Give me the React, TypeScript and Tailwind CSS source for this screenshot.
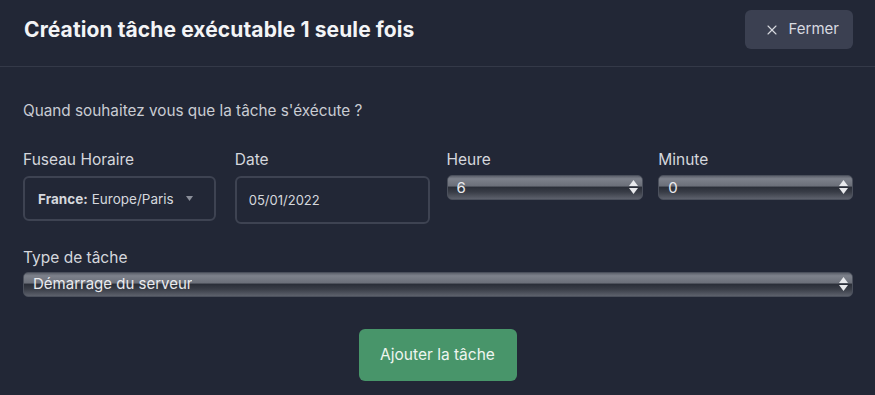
import { X } from "lucide-react";

const AQUA =
  "bg-[linear-gradient(to_bottom,#5d616c_0%,#7d818b_12%,#6c707a_42%,#2b2f39_50%,#393d47_70%,#5d616c_100%)]";

function AquaSelect({ value, className = "" }: { value: string; className?: string }) {
  return (
    <div
      className={`relative flex h-[25px] items-center rounded-[5px] border border-[#4b505c] ${AQUA} pl-[9px] pr-[22px] text-[15px] leading-[20px] text-[#e9eaee] ${className}`}
    >
      <span className="truncate">{value}</span>
      <span className="absolute right-[4px] top-[4px] flex flex-col items-center gap-[2px]">
        <svg width="9" height="6" viewBox="0 0 9 6">
          <path d="M4.5 0L9 6H0z" fill="#e8e9ec" />
        </svg>
        <svg width="9" height="6" viewBox="0 0 9 6">
          <path d="M0 0h9L4.5 6z" fill="#e8e9ec" />
        </svg>
      </span>
    </div>
  );
}

export default function App() {
  return (
    <div
      className="h-[395px] w-[875px] bg-[#222736] text-[#d5d7dd]"
      style={{ fontFamily: "Inter, 'Liberation Sans', sans-serif" }}
    >
      <div className="flex h-[67px] items-start justify-between border-b border-[#343948] pl-[24px] pr-[22px] pt-[10px]">
        <h1 className="mt-[6px] text-[21px] font-bold leading-[28px] tracking-[0.1px] text-[#f3f4f6]">
          Création tâche exécutable 1 seule fois
        </h1>
        <button className="flex h-[39px] items-center gap-[9px] rounded-[6px] bg-[#3b4051] pl-[19px] pr-[14px] text-[15px] text-[#d8dae0]">
          <X size={16} strokeWidth={1.6} />
          Fermer
        </button>
      </div>

      <div className="px-[23px] pt-[33px]">
        <p className="text-[15.3px] leading-[22px] text-[#c9ccd3]">
          Quand souhaitez vous que la tâche s'éxécute ?
        </p>

        <div className="mt-[26px] grid grid-cols-4 gap-x-[18px]">
          <div>
            <div className="text-[15.5px] text-[#d5d7dd]">Fuseau Horaire</div>
            <div className="mt-[5px] flex h-[45px] w-[193px] items-center rounded-[6px] border-2 border-[#3e4352] pl-[13px] text-[13.5px] text-[#d5d7dd]">
              <span className="font-bold">France:</span>
              <span className="ml-[4px]">Europe/Paris</span>
              <svg className="ml-[12px]" width="7" height="5" viewBox="0 0 7 5">
                <path d="M0 0h7L3.5 5z" fill="#8a8e99" />
              </svg>
            </div>
          </div>
          <div>
            <div className="text-[15.5px] text-[#d5d7dd]">Date</div>
            <div className="mt-[5px] flex h-[48px] w-[195px] items-center rounded-[6px] border-2 border-[#3e4352] pl-[12px] text-[13px] text-[#d5d7dd]">
              05/01/2022
            </div>
          </div>
          <div>
            <div className="text-[15.5px] text-[#d5d7dd]">Heure</div>
            <AquaSelect value="6" className="mt-[4px] w-[196px]" />
          </div>
          <div>
            <div className="text-[15.5px] text-[#d5d7dd]">Minute</div>
            <AquaSelect value="0" className="mt-[4px] w-[195px]" />
          </div>
        </div>

        <div className="mt-[22px] text-[15.5px] text-[#d5d7dd]">Type de tâche</div>
        <AquaSelect value="Démarrage du serveur" className="mt-[2px] w-[830px]" />

        <div className="mt-[32px] flex justify-center">
          <button className="h-[52px] w-[158px] rounded-[6px] bg-[#48956a] text-[15.5px] text-[#eef5f0]">
            Ajouter la tâche
          </button>
        </div>
      </div>
    </div>
  );
}
